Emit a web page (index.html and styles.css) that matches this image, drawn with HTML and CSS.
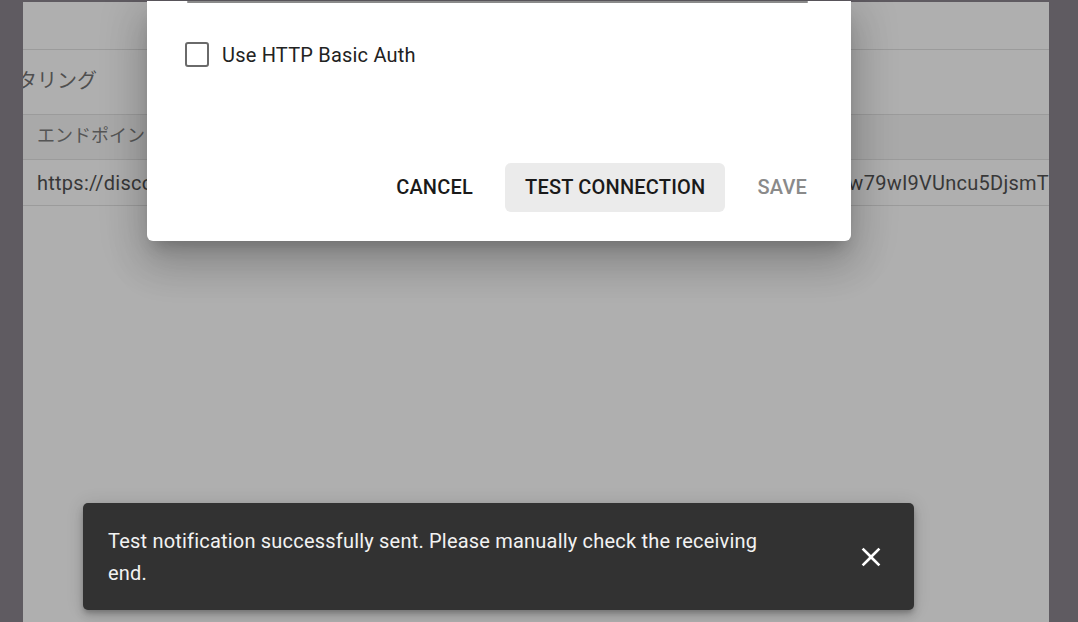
FILE: index.html
```html
<!DOCTYPE html>
<html lang="ja">
<head>
<meta charset="utf-8">
<title>Webhook</title>
<link rel="stylesheet" href="styles.css">
</head>
<body>
<div class="frame">
  <main class="main">
    <div class="row-top"></div>
    <div class="title"><span class="title-text">モニタリング</span></div>
    <div class="thead"><span class="cell">エンドポイント</span></div>
    <div class="trow"><span class="cell url">https://discord.com/api/webhooks/1045678912345678901/Xk3h7Lq2pZr8yTnVbW5dQfiw79wI9VUncu5DjsmTzR4</span></div>
  </main>
</div>

<div class="dialog">
  <div class="field-line"></div>
  <label class="check-row">
    <span class="checkbox"></span>
    <span class="check-label">Use HTTP Basic Auth</span>
  </label>
  <div class="actions">
    <button class="btn">CANCEL</button>
    <button class="btn btn-tonal">TEST CONNECTION</button>
    <button class="btn btn-disabled">SAVE</button>
  </div>
</div>

<div class="snackbar">
  <div class="snack-text">Test notification successfully sent. Please manually check the receiving end.</div>
  <button class="snack-close" aria-label="close">
    <svg width="24" height="24" viewBox="0 0 24 24"><path d="M19 6.41 17.59 5 12 10.59 6.41 5 5 6.41 10.59 12 5 17.59 6.41 19 12 13.41 17.59 19 19 17.59 13.41 12z" fill="#fff"/></svg>
  </button>
</div>
</body>
</html>
```

FILE: styles.css
```css
* { box-sizing: border-box; }

html, body {
  margin: 0;
  height: 622px;
  overflow: hidden;
}

body {
  background: #5f5b61;
  font-family: Roboto, "Noto Sans CJK JP", sans-serif;
  position: relative;
}

.frame {
  display: flex;
  padding: 2px 29px 0 23px;
  height: 622px;
}

.main {
  flex: 1;
  background: #afafaf;
  overflow: hidden;
  white-space: nowrap;
}

.row-top {
  height: 48px;
  border-bottom: 1px solid #9b9b9b;
}

.title {
  height: 65px;
  border-bottom: 1px solid #9b9b9b;
  display: flex;
  align-items: center;
  font-size: 20px;
  color: #4f4f4f;
}

.title-text {
  margin-left: -46px;
  padding-bottom: 6px;
}

.thead {
  height: 45px;
  background: #a9a9a9;
  border-bottom: 1px solid #9b9b9b;
  display: flex;
  align-items: center;
  font-size: 18px;
  color: #555;
}

.thead .cell {
  padding-bottom: 6px;
}

.trow {
  height: 46px;
  border-bottom: 1px solid #9b9b9b;
  display: flex;
  align-items: center;
  font-size: 20px;
  letter-spacing: 0.25px;
  color: #383838;
}

.cell {
  padding-left: 14px;
}

.dialog {
  position: absolute;
  left: 147px;
  top: 1px;
  width: 704px;
  height: 240px;
  background: #fff;
  border-radius: 0 0 6px 6px;
  box-shadow: 0 11px 15px -7px rgba(0,0,0,.2), 0 24px 38px 3px rgba(0,0,0,.14), 0 9px 46px 8px rgba(0,0,0,.12);
  display: flex;
  flex-direction: column;
}

.field-line {
  margin: 0 43px 0 40px;
  height: 2px;
  background: #8a8a8a;
  border-radius: 1px;
}

.check-row {
  display: flex;
  align-items: center;
  gap: 13px;
  margin: 39px 0 0 38px;
}

.checkbox {
  width: 24px;
  height: 25px;
  border: 2.5px solid #6a6a6a;
  border-radius: 3px;
}

.check-label {
  font-size: 20px;
  letter-spacing: 0.2px;
  color: #222;
}

.actions {
  margin-top: auto;
  display: flex;
  justify-content: flex-end;
  gap: 12px;
  padding: 0 24px 29px 0;
}

.btn {
  font-family: Roboto, sans-serif;
  font-size: 20px;
  font-weight: 500;
  letter-spacing: 0.2px;
  height: 49px;
  padding: 0 20px 2px;
  border: none;
  border-radius: 6px;
  background: transparent;
  color: #1a1a1a;
}

.btn-tonal {
  background: #ebebeb;
}

.btn-disabled {
  color: #8a8a8a;
}

.snackbar {
  position: absolute;
  left: 83px;
  top: 503px;
  width: 831px;
  height: 107px;
  background: #323232;
  border-radius: 5px;
  box-shadow: 0 3px 5px -1px rgba(0,0,0,.2), 0 6px 10px 0 rgba(0,0,0,.14), 0 1px 18px 0 rgba(0,0,0,.12);
  display: flex;
  align-items: center;
  padding: 0 19px 0 25px;
}

.snack-text {
  width: 675px;
  font-size: 20px;
  letter-spacing: 0.2px;
  line-height: 32px;
  color: #f2f2f2;
}

.snack-close {
  margin-left: auto;
  width: 48px;
  height: 48px;
  border: none;
  background: transparent;
  display: flex;
  align-items: center;
  justify-content: center;
  padding: 0;
}

.snack-close svg {
  width: 32px;
  height: 32px;
}
```
